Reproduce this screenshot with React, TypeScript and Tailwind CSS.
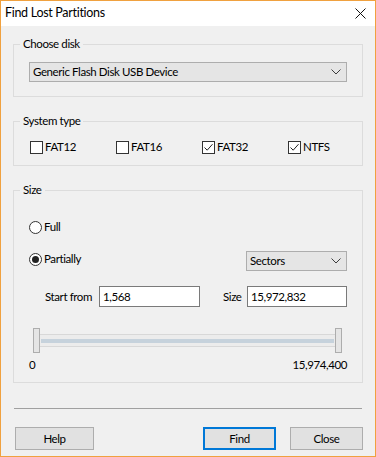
import { useState } from "react";

const font = { fontFamily: 'Lato, "Noto Sans", Arial, sans-serif' };

function Chevron() {
  return (
    <svg width="10" height="6" viewBox="0 0 10 6" fill="none" className="text-[#3c3c3c]">
      <path d="M0.5 0.5L5 5L9.5 0.5" stroke="currentColor" strokeWidth="1" />
    </svg>
  );
}

function Combo({ label, className }: { label: string; className: string }) {
  return (
    <div
      className={`flex items-center justify-between h-[20px] bg-[#e5e5e5] border border-[#adadad] pl-[3px] pr-[5px] ${className}`}
    >
      <span className="leading-none">{label}</span>
      <Chevron />
    </div>
  );
}

function Check({ label, checked, onToggle }: { label: string; checked: boolean; onToggle: () => void }) {
  return (
    <button onClick={onToggle} className="flex items-center h-[16px] cursor-default">
      <span className="w-[13px] h-[13px] border border-[#333333] bg-white flex items-center justify-center">
        {checked && (
          <svg width="11" height="11" viewBox="0 0 11 11" fill="none">
            <path d="M1.5 5.5L4.2 8.2L9.5 2.2" stroke="#222" strokeWidth="1" />
          </svg>
        )}
      </span>
      <span className="ml-[2px] leading-none">{label}</span>
    </button>
  );
}

function Radio({ label, checked, onPick }: { label: string; checked: boolean; onPick: () => void }) {
  return (
    <button onClick={onPick} className="flex items-center h-[16px] cursor-default">
      <span className="w-[13px] h-[13px] rounded-full border border-[#333333] bg-white flex items-center justify-center">
        {checked && <span className="w-[7px] h-[7px] rounded-full bg-[#222]" />}
      </span>
      <span className="ml-[2px] leading-none">{label}</span>
    </button>
  );
}

function Btn({ label, primary }: { label: string; primary?: boolean }) {
  return (
    <button
      className={`h-[23px] bg-[#e1e1e1] flex items-center justify-center leading-none cursor-default ${
        primary ? "border-2 border-[#0078d7]" : "border border-[#adadad]"
      }`}
    >
      {label}
    </button>
  );
}

export default function App() {
  const [types, setTypes] = useState({ FAT12: false, FAT16: false, FAT32: true, NTFS: true });
  const [mode, setMode] = useState<"full" | "part">("part");

  const toggle = (k: keyof typeof types) => setTypes({ ...types, [k]: !types[k] });

  return (
    <div
      style={font}
      className="w-[376px] h-[457px] border border-[#f0a13f] bg-[#f0f0f0] text-[11.5px] tracking-[-0.4px] text-black flex flex-col"
    >
      <div className="h-[25px] bg-white flex items-center justify-between pl-[4px] pr-[9px] shrink-0">
        <span className="text-[12.5px] tracking-[-0.3px] leading-none">Find Lost Partitions</span>
        <svg width="11" height="11" viewBox="0 0 11 11" fill="none">
          <path d="M0.5 0.5L10.5 10.5M10.5 0.5L0.5 10.5" stroke="#111" strokeWidth="1" />
        </svg>
      </div>

      <div className="flex flex-col px-[12px] pt-[10px]">
        <fieldset className="border border-[#dcdcdc] px-[15px] pt-[10px] pb-[14px]">
          <legend className="-ml-[9px] px-[3px] leading-[16px]">Choose disk</legend>
          <Combo label="Generic Flash Disk USB Device" className="w-full" />
        </fieldset>

        <fieldset className="mt-[16px] border border-[#dcdcdc] px-[16px] pt-[10px] pb-[10px]">
          <legend className="-ml-[10px] px-[3px] leading-[16px]">System type</legend>
          <div className="grid grid-cols-[86px_86px_86px_1fr]">
            <Check label="FAT12" checked={types.FAT12} onToggle={() => toggle("FAT12")} />
            <Check label="FAT16" checked={types.FAT16} onToggle={() => toggle("FAT16")} />
            <Check label="FAT32" checked={types.FAT32} onToggle={() => toggle("FAT32")} />
            <Check label="NTFS" checked={types.NTFS} onToggle={() => toggle("NTFS")} />
          </div>
        </fieldset>

        <fieldset className="mt-[16px] border border-[#dcdcdc] px-[15px] pt-[21px] pb-[10px]">
          <legend className="-ml-[9px] px-[3px] leading-[16px]">Size</legend>
          <Radio label="Full" checked={mode === "full"} onPick={() => setMode("full")} />

          <div className="mt-[16px] flex items-start justify-between">
            <Radio label="Partially" checked={mode === "part"} onPick={() => setMode("part")} />
            <Combo label="Sectors" className="w-[101px]" />
          </div>

          <div className="mt-[15px] flex items-center h-[21px] whitespace-nowrap">
            <span className="ml-[16px] w-[54px] leading-none">Start from</span>
            <div className="w-[101px] h-[21px] bg-white border border-[#7a7a7a] flex items-center pl-[3px] leading-none">
              1,568
            </div>
            <span className="ml-[23px] w-[24px] leading-none">Size</span>
            <div className="flex-1 h-[21px] bg-white border border-[#7a7a7a] flex items-center pl-[3px] leading-none">
              15,972,832
            </div>
          </div>

          <div className="mt-[21px] flex items-center h-[25px] pl-[4px] pr-[5px]">
            <div className="w-[7px] h-[25px] bg-[#e5e5e5] border border-[#adadad]" />
            <div className="flex-1 h-[13px] border-y border-[#d8d8d8] bg-[#ececec] flex items-center px-[1px]">
              <div className="w-full h-[4px] bg-[#c6d2dc]" />
            </div>
            <div className="w-[7px] h-[25px] bg-[#e5e5e5] border border-[#adadad]" />
          </div>

          <div className="mt-[5px] flex justify-between leading-[14px]">
            <span>0</span>
            <span>15,974,400</span>
          </div>
        </fieldset>

        <div className="mt-[25px] h-px bg-[#a0a0a0] mx-[1px]" />

        <div className="mt-[18px] flex">
          <div className="w-[79px] ml-[2px] flex flex-col">
            <Btn label="Help" />
          </div>
          <div className="ml-auto w-[73px] flex flex-col">
            <Btn label="Find" primary />
          </div>
          <div className="ml-[14px] w-[73px] flex flex-col">
            <Btn label="Close" />
          </div>
        </div>
      </div>
    </div>
  );
}
